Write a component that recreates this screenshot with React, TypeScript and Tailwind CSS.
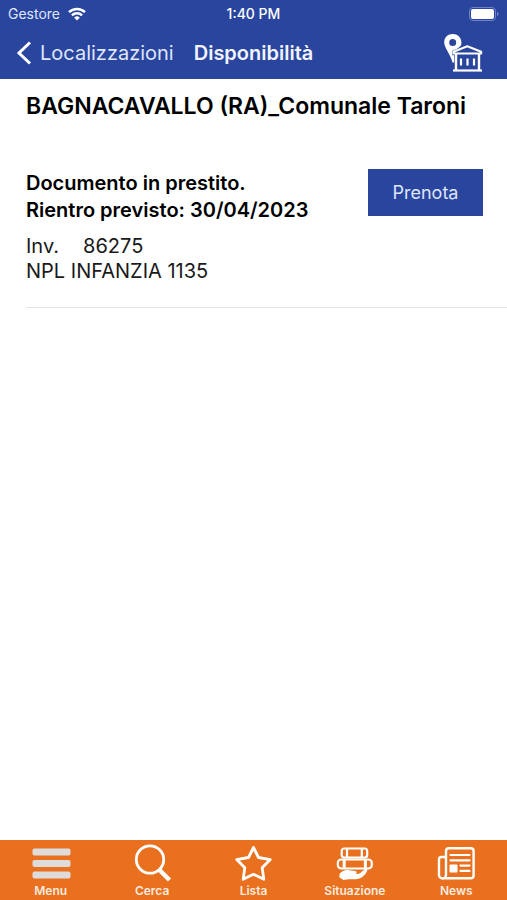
import type { ReactNode } from 'react'

const tabs: { label: string; icon: ReactNode }[] = [
  { label: 'Menu', icon: <MenuIcon /> },
  { label: 'Cerca', icon: <SearchIcon /> },
  { label: 'Lista', icon: <StarIcon /> },
  { label: 'Situazione', icon: <BooksIcon /> },
  { label: 'News', icon: <NewsIcon /> },
]

function MenuIcon() {
  return (
    <svg viewBox="0 0 40 38" className="w-10 h-9.5" fill="#dedcda" aria-hidden="true">
      <rect x="1.5" y="4.5" width="38" height="7" rx="2" />
      <rect x="1.5" y="16" width="38" height="7" rx="2" />
      <rect x="1.5" y="27.5" width="38" height="7" rx="2" />
    </svg>
  )
}

function SearchIcon() {
  return (
    <svg viewBox="0 0 40 38" className="w-10 h-9.5" fill="none" stroke="white" aria-hidden="true">
      <circle cx="18" cy="15.5" r="13.7" strokeWidth="2.8" />
      <path d="M27 25.5 37.5 36" strokeWidth="4.4" />
    </svg>
  )
}

function StarIcon() {
  return (
    <svg viewBox="0 0 40 38" className="w-10 h-9.5" fill="none" stroke="white" strokeWidth="2.8" strokeLinejoin="round" aria-hidden="true">
      <path d="M20.5 3.5 25.5 13.5 37.3 15.6 29.2 23.8 30.8 35.3 20.5 30.3 10.2 35.3 11.8 23.8 3.7 15.6 15.5 13.5Z" />
    </svg>
  )
}

function BooksIcon() {
  return (
    <svg viewBox="0 0 40 38" className="w-10 h-9.5" fill="none" stroke="white" strokeWidth="2.2" strokeLinejoin="round" aria-hidden="true">
      <rect x="6.7" y="4.5" width="25.5" height="9" rx="2.5" />
      <path d="M12 4.5v9M26.8 4.5v9" />
      <rect x="2.8" y="15.5" width="34" height="9" rx="3.5" />
      <path d="M9.2 15.5v9M30.4 15.5v9" strokeWidth="3" />
      <path
        d="M4.5 30C7 26.500 10.500 25.600 14 26.200L20 27C22.500 27.500 22 29.300 20.500 29.800C23.500 30.200 25.500 29.300 27 27.500L29.500 25.200C31.500 24.200 33 25.500 32 27.500C29.500 32 26 34.500 22.500 35C17.500 35.600 13 34.500 8.500 36L4.500 33.500Z"
        fill="white"
        stroke="none"
      />
    </svg>
  )
}

function NewsIcon() {
  return (
    <svg viewBox="0 0 40 38" className="w-10 h-9.5" fill="none" stroke="white" strokeWidth="2.4" strokeLinejoin="round" aria-hidden="true">
      <path d="M10 13H5.5C4 13 3 14 3 15.5V31a3.5 3.5 0 0 0 7 0V7c0-1.8 1-2.8 2.8-2.8h22c1.8 0 2.8 1 2.8 2.8v24.4c0 1.8-1.2 2.9-3 2.9H6.5" />
      <path d="M14.5 11h19M14.5 16.3h19M24.5 21.6h9M24.5 26.9h9" strokeWidth="2.2" strokeLinecap="round" />
      <rect x="13.5" y="20.5" width="8" height="8" rx="1" fill="white" stroke="none" />
    </svg>
  )
}

function LibraryPinIcon() {
  return (
    <svg viewBox="0 1 40 40" className="size-10" fill="none" stroke="white" aria-hidden="true">
      <path
        d="M9.7 2C5 2 1.2 5.5 1.2 10.3c0 6 5.8 10.7 8.3 20.2H13V18L18 13.5c.3-1 .4-2.1.4-3.2C18.4 5.5 14.4 2 9.7 2Zm0 5a3.5 3.5 0 1 1 0 7 3.5 3.5 0 0 1 0-7Z"
        fill="white"
        fillRule="evenodd"
        stroke="none"
      />
      {/* The building cuts a thin blue edge out of the pin */}
      <path d="M10.5 22v-2.5L24.3 14l13.9 5.5V22H36.5v16h-24V22Z" fill="#2a459e" stroke="#2a459e" strokeWidth="2.5" />
      <path d="M10.5 21.5v-1.7L24.3 14.3l13.9 5.5v1.7Z" strokeWidth="2" strokeLinejoin="round" />
      <path d="M13 21v17M36 21v17" strokeWidth="2.4" />
      <path d="M10 38.5h29" strokeWidth="2.2" />
      <path d="M18 26.5v7M24.5 26.5v7M31 26.5v7" strokeWidth="2.2" />
    </svg>
  )
}

function StatusBar() {
  return (
    <div className="grid grid-cols-3 items-center h-7 px-2 text-sm">
      <div className="flex items-center gap-2 text-[#dfe5fb]">
        <span>Gestore</span>
        <svg viewBox="0 0 18 14" className="w-4.5 h-3.5" fill="none" stroke="white" strokeWidth="2.4" aria-hidden="true">
          <path d="M1 5.2a11.5 11.5 0 0 1 16 0M3.9 8.3a7.3 7.3 0 0 1 10.2 0" />
          <path d="M9 13.5 6.2 10.7a4 4 0 0 1 5.6 0Z" fill="white" stroke="none" />
        </svg>
      </div>
      <span className="text-center font-medium text-white">1:40 PM</span>
      <svg viewBox="0 0 30 14" className="w-7.5 h-3.5 justify-self-end" aria-hidden="true">
        <rect x="0.5" y="0.5" width="26" height="13" rx="3.5" fill="none" stroke="#6f84c8" />
        <rect x="2" y="2" width="23" height="10" rx="2" fill="white" />
        <path d="M28 5v4c1-.3 1.6-1 1.6-2S29 5.3 28 5Z" fill="#6f84c8" />
      </svg>
    </div>
  )
}

export default function App() {
  return (
    <div className="flex min-h-screen flex-col bg-white font-['Inter',sans-serif] text-black">
      <header className="bg-[#2a459e]">
        <StatusBar />
        <nav className="flex items-center pl-4 pr-6 pb-0.5 h-[51px]">
          <a href="#localizzazioni" className="flex items-center gap-2 text-xl text-[#dfe5fb]">
            <svg viewBox="0 0 16 24" className="w-4 h-6" fill="none" stroke="white" strokeWidth="3" aria-hidden="true">
              <path d="M14 1.5 3 12l11 10.5" />
            </svg>
            Localizzazioni
          </a>
          <h1 className="ml-5 text-xl font-semibold text-[#f1f4ff]">Disponibilità</h1>
          <button type="button" aria-label="Biblioteca" className="ml-auto">
            <LibraryPinIcon />
          </button>
        </nav>
      </header>

      <main className="flex-1 pl-[26px]">
        <h2 className="pt-3 text-[23px] leading-[30px] font-semibold whitespace-nowrap">BAGNACAVALLO (RA)_Comunale Taroni</h2>

        <section className="mt-12 pb-[23px] border-b border-[#e4e4e4]">
          <div className="flex items-start justify-between pr-6">
            <p className="pt-px text-xl leading-[27px] font-semibold">
              Documento in prestito.
              <br />
              Rientro previsto: 30/04/2023
            </p>
            <button type="button" className="h-[47px] w-[115px] bg-[#2a459e] text-lg text-[#dfe5fb]">
              Prenota
            </button>
          </div>
          <div className="mt-2.5 text-xl leading-[25px] text-[#1a1a1a]">
            <p className="flex gap-6">
              <span>Inv.</span>
              <span>86275</span>
            </p>
            <p>NPL INFANZIA 1135</p>
          </div>
        </section>
      </main>

      {/* Tab bar */}
      <footer className="bg-[#e8701f]">
        <ul className="grid grid-cols-5">
          {tabs.map((tab) => (
            <li key={tab.label}>
              <a href={`#${tab.label.toLowerCase()}`} className="flex h-[60px] flex-col items-center pt-1 text-xs leading-[18px] font-semibold text-[#fdeadd]">
                {tab.icon}
                {tab.label}
              </a>
            </li>
          ))}
        </ul>
      </footer>
    </div>
  )
}
